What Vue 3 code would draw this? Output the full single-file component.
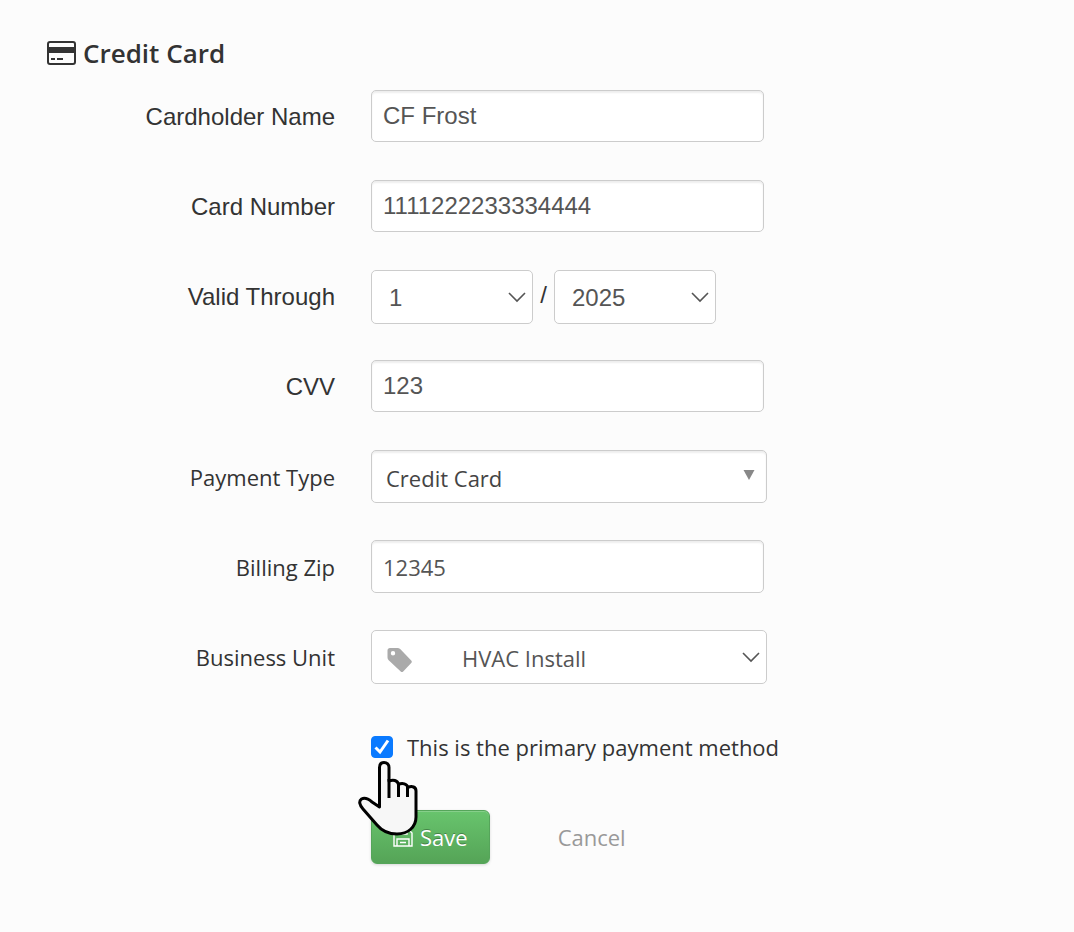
<template>
  <main class="payment-page">
    <h1 class="page-title">
      <svg class="title-icon" viewBox="0 0 30 26" width="30" height="26" aria-hidden="true">
        <rect x="1" y="2" width="27" height="22" rx="2" fill="none" stroke="#333" stroke-width="2" />
        <path fill="#333" d="M1 7h27v6H1z" />
        <path stroke="#333" stroke-width="2" d="M4 19h4M10 19h6" />
      </svg>
      Credit Card
    </h1>

    <form class="card-form" @submit.prevent>
      <div class="form-row arial">
        <label for="holder">Cardholder Name</label>
        <div class="control">
          <input id="holder" v-model="card.holder" class="text-input" type="text" />
        </div>
      </div>

      <div class="form-row arial">
        <label for="number">Card Number</label>
        <div class="control">
          <input id="number" v-model="card.number" class="text-input" type="text" />
        </div>
      </div>

      <div class="form-row arial">
        <label for="month">Valid Through</label>
        <div class="control expiry">
          <div class="select-box short">
            <select id="month" v-model="card.month">
              <option v-for="m in 12" :key="m" :value="m">{{ m }}</option>
            </select>
            <svg class="chevron" viewBox="0 0 18 12" width="18" height="12">
              <path d="M1 2l8 8 8-8" />
            </svg>
          </div>
          <span class="slash">/</span>
          <div class="select-box short">
            <select v-model="card.year" aria-label="Year">
              <option v-for="y in years" :key="y" :value="y">{{ y }}</option>
            </select>
            <svg class="chevron" viewBox="0 0 18 12" width="18" height="12">
              <path d="M1 2l8 8 8-8" />
            </svg>
          </div>
        </div>
      </div>

      <div class="form-row arial">
        <label for="cvv">CVV</label>
        <div class="control">
          <input id="cvv" v-model="card.cvv" class="text-input" type="text" />
        </div>
      </div>

      <div class="form-row">
        <label for="type">Payment Type</label>
        <div class="control">
          <div class="select-box type">
            <select id="type" v-model="card.type">
              <option>Credit Card</option>
            </select>
            <svg class="triangle" viewBox="0 0 12 10" width="12" height="10">
              <path fill="#888" d="M.5 0h11L6 10z" />
            </svg>
          </div>
        </div>
      </div>

      <div class="form-row">
        <label for="zip">Billing Zip</label>
        <div class="control">
          <input id="zip" v-model="card.zip" class="text-input tall" type="text" />
        </div>
      </div>

      <div class="form-row">
        <label for="unit">Business Unit</label>
        <div class="control">
          <div class="select-box unit">
            <svg class="tag" viewBox="0 0 26 26" width="26" height="26">
              <path
                fill="#aaa"
                fill-rule="evenodd"
                d="M3 1h7.500c1 0 2 .4 2.700 1.100l11 11.400c.8.8.8 1.700 0 2.500l-8 8.400c-.8.800-1.700.8-2.500 0L1.700 13.200C.9 12.500.5 11.500.5 10.500V3.500C.5 2 1.500 1 3 1zm3 3a2.200 2.200 0 1 0 0 4.400A2.200 2.200 0 0 0 6 4z"
              />
            </svg>
            <select id="unit" v-model="card.unit">
              <option>HVAC Install</option>
            </select>
            <svg class="chevron" viewBox="0 0 18 12" width="18" height="12">
              <path d="M1 2l8 8 8-8" />
            </svg>
          </div>
        </div>
      </div>

      <div class="form-row">
        <div class="control primary">
          <span class="check-box">
            <input id="primary" v-model="card.primary" type="checkbox" />
            <svg v-if="card.primary" class="check" viewBox="0 0 22 22" width="22" height="22">
              <path fill="none" stroke="#fff" stroke-width="3" d="M4.500 11.500l4.500 4.500 8-11.500" />
            </svg>
            <svg class="pointer" viewBox="0 0 60 76" width="60" height="76" aria-hidden="true">
              <path
                d="M21.500 47V7.500C21.500 4.500 23 2.500 26 2.500S31 4.500 31 7.500V21C35 19.500 39.500 20 40.500 24.500C44.500 22.500 49 24 50 27.500C54 25.500 58 27 58 31V57C58 67 50 74 39 74C30 74 24 71 19 65L5 49C1.500 45 .5 41 3.500 39C6.500 37.500 10.500 39 14 42z"
              />
              <path d="M31 19v19M40.500 24v13M49.500 27v10" />
            </svg>
          </span>
          <label for="primary">This is the primary payment method</label>
        </div>
      </div>

      <div class="form-row">
        <div class="control actions">
          <button class="save-button" type="submit">
            <svg viewBox="0 0 20 20" width="20" height="20" aria-hidden="true">
              <path d="M1 1h13l5 5v13H1zM5 1v6h9V1M4 19v-7h12v7M7 15.500h6" />
            </svg>
            <span>Save</span>
          </button>
          <a class="cancel-link" href="#">Cancel</a>
        </div>
      </div>
    </form>
  </main>
</template>

<script setup>
import { reactive } from 'vue'

const years = [2024, 2025, 2026, 2027, 2028, 2029, 2030]

const card = reactive({
  holder: 'CF Frost',
  number: '1111222233334444',
  month: 1,
  year: 2025,
  cvv: '123',
  type: 'Credit Card',
  zip: '12345',
  unit: 'HVAC Install',
  primary: true
})
</script>

<style>
body {
  margin: 0;
  background-color: #fcfcfc;
}
</style>

<style scoped>
.payment-page {
  padding: 35px 48px 68px 47px;
  font-family: "Open Sans", "Noto Sans", sans-serif;
  font-size: 22px;
  color: #333;
}

.page-title {
  display: flex;
  align-items: center;
  gap: 6px;
  margin: 0 0 19px;
  font-size: 26px;
  font-weight: 600;
  line-height: 36px;
}

.card-form {
  display: flex;
  flex-direction: column;
  gap: 36px;
}

.form-row {
  display: grid;
  grid-template-columns: minmax(100px, 288px) minmax(0, 1fr);
  column-gap: 36px;
  min-height: 54px;
  line-height: 54px;
}

.form-row > label {
  text-align: right;
}

.arial {
  font-family: "Liberation Sans", Arial, sans-serif;
  font-size: 24px;
}

.control {
  grid-column: 2;
}

.text-input,
select {
  box-sizing: border-box;
  width: 100%;
  margin: 0;
  border: 1px solid #ccc;
  border-radius: 5px;
  background-color: #fff;
  font: inherit;
  color: #555;
}

.text-input {
  display: block;
  max-width: 393px;
  height: 52px;
  padding: 0 11px;
  box-shadow: inset 0 2px 2px rgba(0, 0, 0, 0.07);
}

.tall {
  height: 53px;
}

select {
  display: block;
  height: 54px;
  padding: 0 40px 0 17px;
  appearance: none;
}

.select-box {
  position: relative;
  max-width: 396px;
}

.short {
  flex: 0 1 162px;
}

.type select {
  height: 53px;
  padding-left: 14px;
  color: #444;
  box-shadow: inset 0 2px 2px rgba(0, 0, 0, 0.07);
}

.unit select {
  padding-left: 90px;
}

.expiry {
  display: flex;
}

.slash {
  width: 21px;
  line-height: 50px;
  text-align: center;
}

.chevron,
.triangle,
.tag {
  position: absolute;
  pointer-events: none;
}

.chevron {
  top: 21px;
  right: 7px;
  fill: none;
  stroke: #555;
  stroke-width: 1.6;
}

.triangle {
  top: 20px;
  right: 12px;
}

.tag {
  top: 17px;
  left: 16px;
}

.primary {
  display: flex;
  align-items: center;
  gap: 14px;
}

.check-box {
  position: relative;
  width: 22px;
  height: 22px;
}

.check-box input {
  display: block;
  width: 22px;
  height: 22px;
  margin: 0;
  border: 1px solid #767676;
  border-radius: 4px;
  background-color: #fff;
  appearance: none;
}

.check-box input:checked {
  border-color: #0a7aff;
  background-color: #0a7aff;
}

.check {
  position: absolute;
  top: 0;
  left: 0;
  pointer-events: none;
}

.pointer {
  position: absolute;
  top: 24px;
  left: -13px;
  z-index: 2;
  fill: #f7f7f7;
  stroke: #000;
  stroke-width: 3;
  stroke-linejoin: round;
  overflow: visible;
  pointer-events: none;
}

.actions {
  display: flex;
  gap: 68px;
}

.save-button {
  display: flex;
  align-items: center;
  justify-content: center;
  gap: 7px;
  height: 54px;
  padding: 0 21px;
  border: 1px solid #55a55a;
  border-radius: 6px;
  background: linear-gradient(#68c46d, #55a457);
  box-shadow: inset 0 1px 0 rgba(255, 255, 255, 0.2), 0 1px 3px rgba(0, 0, 0, 0.15);
  font: inherit;
  color: #fff;
  text-shadow: 0 -1px 0 rgba(0, 0, 0, 0.3);
  cursor: pointer;
}

.save-button svg {
  fill: none;
  stroke: #fff;
  stroke-width: 1.4;
}

.cancel-link {
  color: #999;
  text-decoration: none;
}
</style>
